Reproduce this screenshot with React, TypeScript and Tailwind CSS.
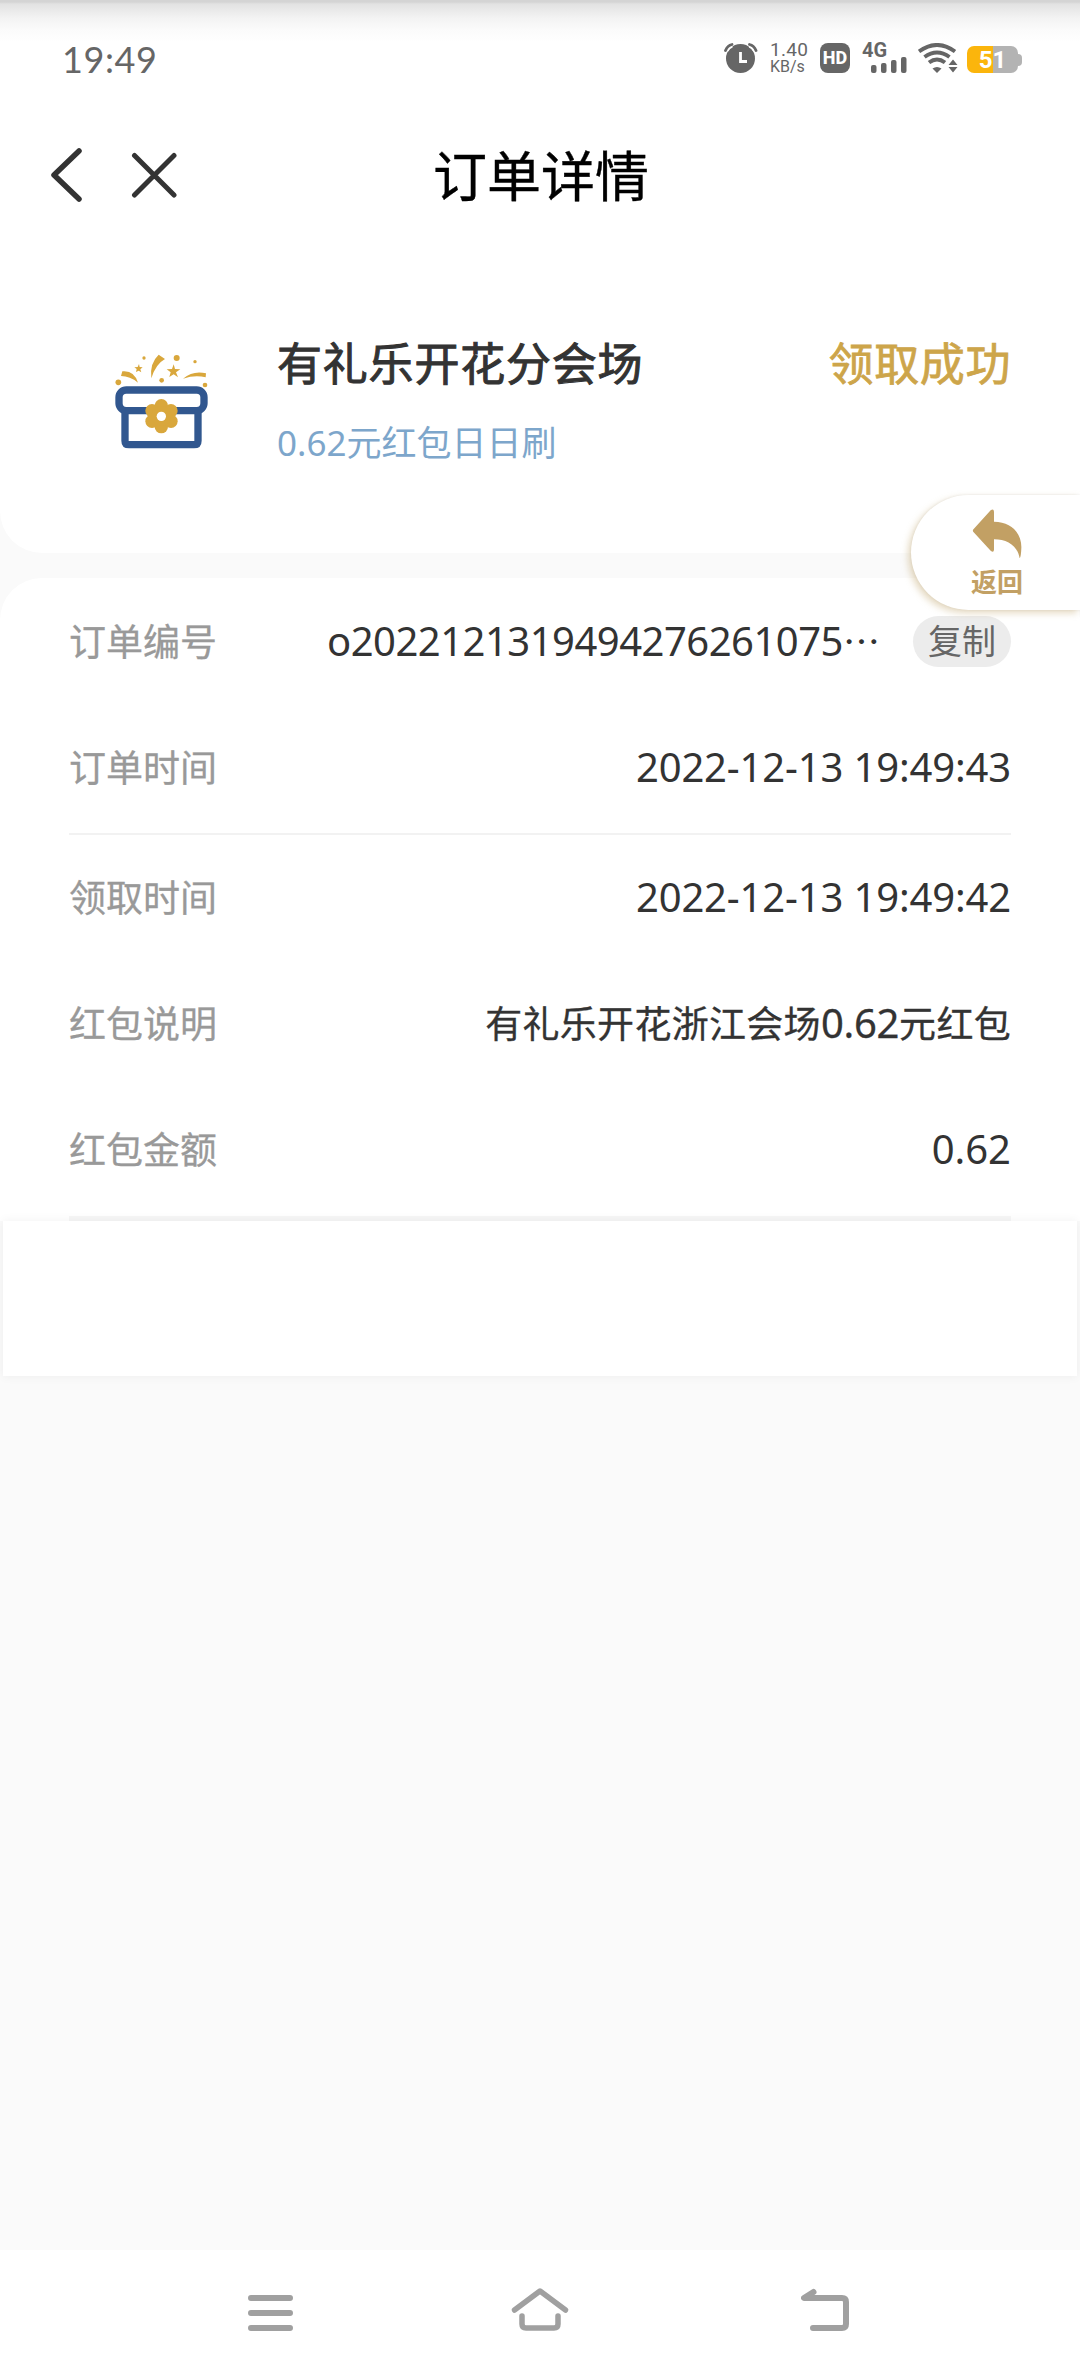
import type { ReactNode } from "react";

function StatusBar() {
  return (
    <div className="flex h-[115px] items-start bg-[linear-gradient(to_bottom,#d4d4d4_0px,#d4d4d4_2px,#e2e2e2_4px,#f3f3f3_18px,#fbfbfb_30px,#ffffff_42px)] pl-[62px] pt-[43px] text-[#666666]">
      <span className="-mt-px w-[662px] font-['Lato',sans-serif] text-[36px] leading-[34px] tracking-[0.6px]">
        19:49
      </span>

      <svg className="h-[30px] w-[34px] shrink-0" viewBox="0 0 34 30">
        <circle cx="16.5" cy="15.5" r="14.5" fill="#666" />
        <path d="M1.500 7.500Q3.500 2.500 8 1.500M32 7.500Q30 2.500 25.500 1.500" fill="none" stroke="#fff" strokeWidth="6" />
        <path d="M1.500 7.500Q3.500 2.500 8 1.500M32 7.500Q30 2.500 25.500 1.500" fill="none" stroke="#666" strokeWidth="2.800" strokeLinecap="round" />
        <path d="M16.500 9V18.500H23" fill="none" stroke="#fff" strokeWidth="2.800" />
      </svg>

      <div className="-mt-px ml-[12px] w-[50px] font-['Roboto',sans-serif]">
        <div className="text-[19px] leading-[15px] tracking-[0.3px]">1.40</div>
        <div className="mt-[2px] text-[16px] leading-[16px]">KB/s</div>
      </div>

      <div className="flex h-[30px] w-[30px] shrink-0 items-center justify-center rounded-[8px] bg-[#666666] font-['Roboto',sans-serif] text-[18px] font-extrabold leading-none text-white">
        HD
      </div>

      <div className="relative ml-[12px] h-[30px] w-[45px] shrink-0">
        <span className="absolute left-0 top-0 font-['Roboto',sans-serif] text-[20px] font-bold leading-[15px]">
          4G
        </span>
        <svg className="h-[30px] w-[45px]" viewBox="0 0 45 30" fill="#666">
          <rect x="9" y="22" width="5.500" height="8" rx="2" />
          <rect x="19" y="20" width="5.500" height="10" rx="2" />
          <rect x="29" y="17" width="5.500" height="13" rx="2" />
          <rect x="39" y="14" width="5.500" height="16" rx="2" />
        </svg>
      </div>

      <svg className="ml-[11px] h-[30px] w-[40px] shrink-0" viewBox="0 0 40 30">
        <g fill="none" stroke="#666" strokeWidth="4">
          <path d="M1 8.500Q19 -4.500 37 8.500" />
          <path d="M6.500 14Q19 5 31.500 14" />
          <path d="M11 19.500Q19 13.500 27 19.500" />
        </g>
        <path d="M14.500 25.500Q19 22.500 23.500 25.500L19 30Z" fill="#666" />
        <path d="M35 16.500L39.500 22H30.500ZM30.500 24H39.500L35 29.500Z" fill="#666" />
      </svg>

      <div className="ml-[9px] mt-[3px] flex shrink-0 items-center">
        <div className="flex h-[27px] w-[51px] items-center justify-center rounded-[7px] bg-[linear-gradient(to_right,#fbb50c_51%,#b3b3b3_51%)] font-['Roboto',sans-serif] text-[24px] font-bold leading-none text-white">
          51
        </div>
        <div className="h-[12px] w-[4px] rounded-r-[4px] bg-[#b3b3b3]" />
      </div>
    </div>
  );
}

function Header() {
  return (
    <header className="flex h-[120px] items-center pl-[50px]">
      <svg className="h-[56px] w-[33px]" viewBox="0 0 33 56" fill="none" stroke="#333" strokeWidth="5.500" strokeLinecap="round" strokeLinejoin="round">
        <path d="M29 4L4 28L29 52" />
      </svg>
      <svg className="ml-[48px] h-[46px] w-[46px]" viewBox="0 0 46 46" stroke="#333" strokeWidth="5" strokeLinecap="round">
        <path d="M3.500 3.500L43 43M43 3.500L3.500 43" />
      </svg>
      <h1 className="ml-[256px] mt-[2px] text-[54px] leading-none text-black [-webkit-text-stroke:0.4px]">
        订单详情
      </h1>
    </header>
  );
}

function GiftIcon() {
  return (
    <svg className="h-[98px] w-[97px] shrink-0" viewBox="99 96 291 294">
      <g fill="none" stroke="#31578f" strokeWidth="22">
        <rect x="117" y="210" width="255" height="62" rx="22" />
        <path d="M135 272V362Q135 374 147 374H342Q354 374 354 362V272" />
      </g>
      <g fill="#d9a73c">
        <circle cx="244" cy="257" r="20" />
        <circle cx="273" cy="272" r="20" />
        <circle cx="273" cy="304" r="20" />
        <circle cx="244" cy="320" r="20" />
        <circle cx="216" cy="304" r="20" />
        <circle cx="216" cy="272" r="20" />
        <circle cx="244" cy="288" r="30" />
        <circle cx="115" cy="187" r="8.500" />
        <circle cx="192" cy="114" r="5" />
        <circle cx="290" cy="114" r="9" />
        <circle cx="345" cy="125" r="5" />
        <circle cx="245" cy="181" r="7" />
        <circle cx="375" cy="195" r="7" />
        <path d="M127 154Q162 150 174 188Q150 168 123 168Z" />
        <path d="M236 104L255 117Q227 132 214 175Q208 130 236 104Z" />
        <path d="M309 176Q340 150 378 160L377 172Q345 164 309 176Z" />
        <path d="M281 133L285 147L301 148L288 157L294 172L281 163L268 171L272 157L260 148L276 147Z" />
        <path d="M177 132L179 141L188 142L181 148L184 157L176 152L168 156L170 147L163 142L173 141Z" />
      </g>
      <circle cx="244" cy="289" r="14" fill="#fff" />
    </svg>
  );
}

function Summary() {
  return (
    <section className="flex h-[318px] items-start rounded-b-[42px] bg-white pl-[113px] pr-[70px] pt-[117px]">
      <GiftIcon />
      <div className="-mt-[17px] ml-[67px]">
        <h2 className="text-[45px] leading-[58px] tracking-[0.8px] text-[#333333] [-webkit-text-stroke:1px]">
          有礼乐开花分会场
        </h2>
        <p className="mt-[29px] text-[35px] leading-[42px] text-[#7da6cb]">
          0.62元红包日日刷
        </p>
      </div>
      <div className="-mr-px -mt-[17px] ml-auto text-[45px] leading-[58px] tracking-[0.6px] text-[#cda54a] [-webkit-text-stroke:0.8px]">
        领取成功
      </div>
    </section>
  );
}

function Row({ label, children }: { label: string; children: ReactNode }) {
  return (
    <div className="flex h-[126px] items-center justify-between">
      <span className="text-[37px] leading-none text-[#999999] [-webkit-text-stroke:0.3px]">{label}</span>
      <div className="flex items-center text-[37px] leading-none text-[#333333]">
        {children}
      </div>
    </div>
  );
}

function OrderInfo() {
  return (
    <section className="mt-[25px] h-[643px] rounded-t-[42px] bg-white px-[69px]">
      <Row label="订单编号">
        <span className="text-[40px] tracking-[-0.5px]">o2022121319494276261075</span>
        <span>⋯</span>
        <button className="ml-[33px] h-[51px] w-[98px] rounded-full bg-[#ececec] text-[34px] leading-none text-[#666666]">
          复制
        </button>
      </Row>
      <Row label="订单时间">
        <span className="text-[40px] tracking-[-0.15px]">2022-12-13 19:49:43</span>
      </Row>
      <div className="-mb-px mt-[3px] h-[2px] bg-[#f2f2f2]" />
      <Row label="领取时间">
        <span className="text-[40px] tracking-[-0.15px]">2022-12-13 19:49:42</span>
      </Row>
      <Row label="红包说明">
        <span className="tracking-[0.3px] [-webkit-text-stroke:0.3px]">
          有礼乐开花浙江会场<span className="text-[40px] tracking-[-0.3px]">0.62</span>元红包
        </span>
      </Row>
      <Row label="红包金额">
        <span className="text-[40px]">0.62</span>
      </Row>
      <div className="mt-[4px] h-[5px] bg-[#f6f6f6]" />
    </section>
  );
}

function BackTab() {
  return (
    <button className="absolute right-0 top-[495px] flex h-[115px] w-[169px] flex-col items-center rounded-l-full bg-white pl-[3px] pt-[14px] shadow-[-3px_3px_7px_rgba(190,160,100,0.4),0_0_3px_rgba(0,0,0,0.08)]">
      <svg className="h-[50px] w-[50px]" viewBox="0 0 150 150" fill="#c2a064">
        <path d="M5 60L56 4Q65 -3 66 8V38C120 38 150 75 148 118Q147 145 143 148C137 110 105 91 66 91V122Q65 133 56 125L5 70Q0 65 5 60Z" />
      </svg>
      <span className="mt-[9px] text-[26px] font-bold leading-[28px] text-[#c2a064]">
        返回
      </span>
    </button>
  );
}

function NavBar() {
  return (
    <nav className="flex h-[126px] items-start bg-white pl-[248px] pt-[38px]">
      <svg className="h-[44px] w-[45px]" viewBox="0 0 45 44" stroke="#a0a0a0" strokeWidth="6" strokeLinecap="round">
        <path d="M3 10H42M3 25H42M3 40H42" />
      </svg>
      <svg className="ml-[218px] h-[44px] w-[58px]" viewBox="0 0 58 44" fill="none" stroke="#a0a0a0" strokeWidth="5.500" strokeLinecap="round" strokeLinejoin="round">
        <path d="M3.500 22L29 3L54.500 22M11 28V36Q11 40 15 40H43Q47 40 47 36V28" />
      </svg>
      <svg className="ml-[232px] h-[44px] w-[48px]" viewBox="0 0 48 44" fill="none" stroke="#a0a0a0" strokeWidth="6" strokeLinecap="round" strokeLinejoin="round">
        <path d="M12.500 4L3 10H41Q45 10 45 14V36Q45 40 41 40H12" />
      </svg>
    </nav>
  );
}

export default function App() {
  return (
    <div className="relative flex h-[2376px] w-[1080px] flex-col overflow-hidden bg-[#fafafa] font-['Noto_Sans','Noto_Sans_CJK_SC',sans-serif]">
      <div className="bg-white">
        <StatusBar />
        <Header />
      </div>
      <Summary />
      <OrderInfo />
      <div className="mx-[3px] h-[155px] bg-white shadow-[0_0_10px_rgba(0,0,0,0.06)]" />
      <div className="flex-1" />
      <NavBar />
      <BackTab />
    </div>
  );
}
